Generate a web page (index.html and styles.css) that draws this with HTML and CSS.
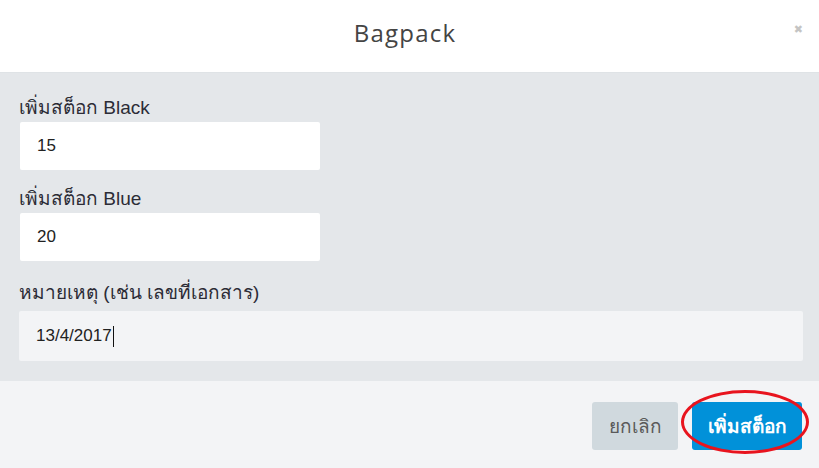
FILE: index.html
```
<!DOCTYPE html>
<html>
<head>
<meta charset="utf-8">
<link rel="stylesheet" href="styles.css">
</head>
<body>
<div class="modal">
  <div class="modal-header">
    <h1 class="title">Bagpack</h1>
    <span class="close">&#10006;</span>
  </div>
  <div class="modal-body">
    <div class="field">
      <label class="label">เพิ่มสต็อก Black</label>
      <div class="input short">15</div>
    </div>
    <div class="field">
      <label class="label">เพิ่มสต็อก Blue</label>
      <div class="input short">20</div>
    </div>
    <div class="field field-note">
      <label class="label">หมายเหตุ (เช่น เลขที่เอกสาร)</label>
      <div class="input wide">13/4/2017<span class="caret"></span></div>
    </div>
  </div>
  <div class="modal-footer">
    <button class="btn btn-cancel">ยกเลิก</button>
    <button class="btn btn-primary">เพิ่มสต็อก</button>
    <span class="ring"></span>
  </div>
</div>
</body>
</html>
```
FILE: styles.css
```
html, body { margin: 0; padding: 0; }
body {
  width: 819px;
  height: 468px;
  overflow: hidden;
  font-family: "Liberation Sans", "Noto Sans", "DejaVu Sans", sans-serif;
  background: #fff;
}
.modal { display: flex; flex-direction: column; height: 468px; }
.modal-header {
  height: 72px;
  border-bottom: 1px solid #dfe3e6;
  display: flex;
  align-items: center;
  justify-content: center;
  position: relative;
  background: #fff;
}
.title {
  margin: 0 9px 7px 0;
  font-family: "Open Sans", "Liberation Sans", sans-serif;
  font-weight: 400;
  font-size: 24px;
  color: #444;
  letter-spacing: 1.2px;
}
.close {
  position: absolute;
  right: 16px;
  top: 23px;
  font-size: 11px;
  color: #c4c4c4;
}
.modal-body {
  background: #e4e7ea;
  height: 308px;
  padding: 17px 16px 0 19px;
  box-sizing: border-box;
  display: flex;
  flex-direction: column;
}
.field { display: flex; flex-direction: column; margin-bottom: 11px; }
.field-note { margin-top: 3px; }
.label {
  font-size: 19px;
  color: #2c2c36;
  line-height: 32px;
  height: 32px;
  padding-top: 2px;
  box-sizing: border-box;
}
.input {
  height: 48px;
  box-sizing: border-box;
  background: #fff;
  border-radius: 2px;
  padding: 0 17px;
  display: flex;
  align-items: center;
  font-size: 17px;
  color: #222;
}
.short { width: 300px; margin-left: 1px; }
.wide { width: 784px; background: #f3f4f6; height: 50px; margin-top: 4px; }
.caret { display: inline-block; width: 1px; height: 21px; background: #111; margin-left: 1px; }
.modal-footer {
  flex: 1;
  background: #f3f4f6;
  display: flex;
  justify-content: flex-end;
  align-items: center;
  padding-right: 17px;
  gap: 14px;
  position: relative;
}
.btn {
  height: 48px;
  border: none;
  border-radius: 3px;
  font-family: "Liberation Sans", "Noto Sans", sans-serif;
  font-size: 19px;
  padding: 0;
  margin-top: 3px;
}
.btn-cancel { width: 86px; background: #d0d9de; color: #5a5a5a; }
.btn-primary { width: 110px; background: #0191d9; color: #fff; font-weight: bold; }
.ring {
  position: absolute;
  left: 681px;
  top: 9px;
  width: 128px;
  height: 64px;
  border: 3px solid #e8141e;
  border-radius: 50%;
  box-sizing: border-box;
}
```
